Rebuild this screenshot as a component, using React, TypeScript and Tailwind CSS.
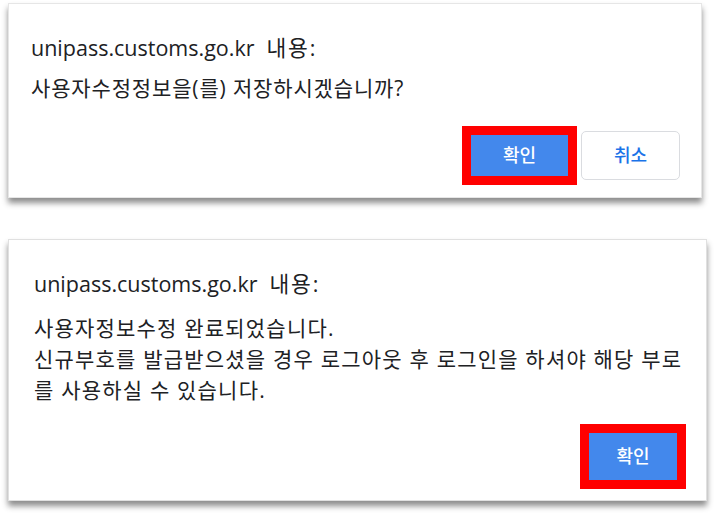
const font = { fontFamily: '"Open Sans", "Noto Sans CJK KR", sans-serif' };

function OkButton({ size }: { size: string }) {
  return (
    <div className={`${size} border-[9px] border-[#ff0000] flex`}>
      <button className="flex-1 bg-[#4388ec] text-white text-[18px] font-medium">확인</button>
    </div>
  );
}

function Title() {
  return (
    <div className="text-[21.5px] leading-[30px] text-[#202124]">
      unipass.customs.go.kr<span className="ml-[12px] tracking-[1.8px]">내용:</span>
    </div>
  );
}

export default function App() {
  return (
    <div className="w-[717px] h-[516px] bg-white pt-[3px] pl-[8px]" style={font}>
      <div className="w-[694px] h-[195px] bg-white border border-[#e6e6e6] shadow-[0_5px_6px_rgba(0,0,0,0.45)] flex flex-col pl-[22px] pr-[21px]">
        <div className="mt-[29px]">
          <Title />
        </div>
        <div className="mt-[10px] text-[21px] leading-[30px] tracking-[0.85px] text-[#202124]">
          사용자수정정보을(를) 저장하시겠습니까?
        </div>
        <div className="mt-auto mb-[12px] flex justify-end items-center gap-[4px]">
          <OkButton size="w-[115px] h-[59px]" />
          <button className="w-[99px] h-[49px] rounded-[5px] border border-[#dadce0] text-[#1a73e8] text-[18px] font-medium">
            취소
          </button>
        </div>
      </div>

      <div className="mt-[41px] w-[699px] h-[262px] bg-white border border-[#e0e0e0] shadow-[0_5px_6px_rgba(0,0,0,0.45)] flex flex-col pl-[25px] pr-[20px]">
        <div className="mt-[29px]">
          <Title />
        </div>
        <div className="mt-[14px] text-[21px] leading-[31px] tracking-[1.2px] text-[#202124]">
          <div>사용자정보수정 완료되었습니다.</div>
          <div>신규부호를 발급받으셨을 경우 로그아웃 후 로그인을 하셔야 해당 부로</div>
          <div>를 사용하실 수 있습니다.</div>
        </div>
        <div className="mt-auto mb-[11px] flex justify-end">
          <OkButton size="w-[106px] h-[65px]" />
        </div>
      </div>
    </div>
  );
}
